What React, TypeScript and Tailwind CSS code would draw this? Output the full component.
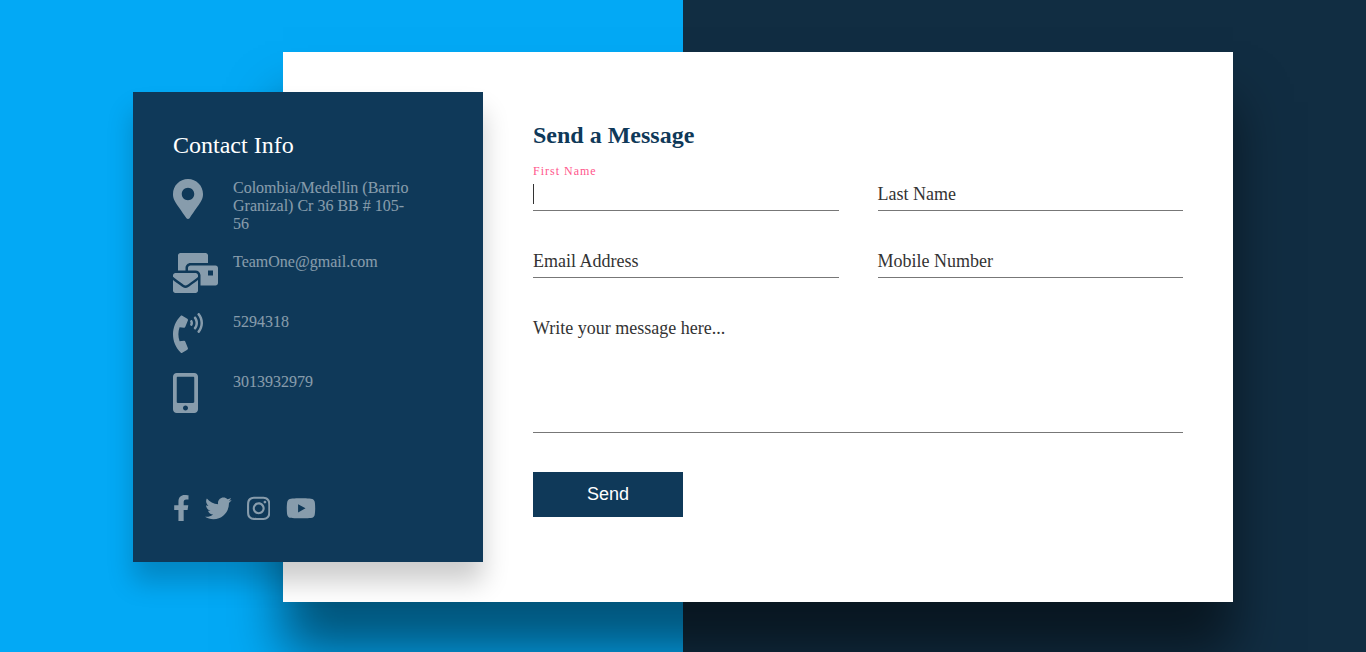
import type { ReactNode } from "react";
import {
  FaFacebookF,
  FaInstagram,
  FaMailBulk,
  FaMapMarkerAlt,
  FaMobileAlt,
  FaPhoneVolume,
  FaTwitter,
  FaYoutube,
} from "react-icons/fa";

function InfoRow({ icon, children }: { icon: ReactNode; children: ReactNode }) {
  return (
    <li className="mb-5 flex items-start opacity-50">
      <span className="w-[60px] shrink-0">{icon}</span>
      <span className="w-[180px] text-[16px] leading-[18px]">{children}</span>
    </li>
  );
}

function Field({ label, active = false }: { label: string; active?: boolean }) {
  return (
    <div className="relative flex h-[31px] w-[47%] items-start border-b border-[#777]">
      {active ? (
        <>
          <span className="absolute -top-4 left-0 text-[12px] leading-[14px] tracking-[1px] text-[#ff568c]">
            {label}
          </span>
          <span className="mt-1 h-5 w-px bg-[#333]" />
        </>
      ) : (
        <span className="mt-1 text-[18px] leading-5 text-[#333]">{label}</span>
      )}
    </div>
  );
}

export default function App() {
  return (
    <main className="flex h-[652px] w-full overflow-hidden bg-[linear-gradient(90deg,#03a9f5_50%,#112d42_50%)] pt-[52px] pl-[133px] font-['Liberation_Serif',serif]">
      <aside className="relative z-10 mt-10 flex h-[470px] w-[350px] shrink-0 flex-col justify-between bg-[#0f3959] p-10 text-white shadow-[0_20px_25px_rgba(0,0,0,0.2)]">
        <div>
          <h2 className="text-[24px] leading-[27px]">Contact Info</h2>
          <ul className="mt-5">
            <InfoRow icon={<FaMapMarkerAlt className="h-10 w-[30px]" />}>
              Colombia/Medellin (Barrio Granizal) Cr 36 BB # 105-56
            </InfoRow>
            <InfoRow icon={<FaMailBulk className="h-10 w-[45px]" />}>TeamOne@gmail.com</InfoRow>
            <InfoRow icon={<FaPhoneVolume className="h-10 w-[30px]" />}>5294318</InfoRow>
            <InfoRow icon={<FaMobileAlt className="h-10 w-[25px]" />}>3013932979</InfoRow>
          </ul>
        </div>
        <div className="mb-[0.7px] flex gap-[15.3px] opacity-50">
          <FaFacebookF className="h-[26.7px] w-[16.7px]" />
          <FaTwitter className="h-[26.7px] w-[26.7px]" />
          <FaInstagram className="h-[26.7px] w-[23.4px]" />
          <FaYoutube className="h-[26.7px] w-[30px]" />
        </div>
      </aside>
      <section className="-ml-[200px] h-[550px] w-[950px] shrink-0 bg-white pt-[70px] pr-[50px] pl-[250px] shadow-[0_50px_50px_rgba(0,0,0,0.5)]">
        <h2 className="text-[24px] leading-[27px] font-bold text-[#0f3959]">Send a Message</h2>
        <form className="mt-[31px]">
          <div className="mb-9 flex justify-between">
            <Field label="First Name" active />
            <Field label="Last Name" />
          </div>
          <div className="mb-9 flex justify-between">
            <Field label="Email Address" />
            <Field label="Mobile Number" />
          </div>
          <div className="h-[119px] border-b border-[#777] pt-1 text-[18px] leading-5 text-[#333]">
            Write your message here...
          </div>
          <button
            type="button"
            className="mt-[39px] h-[45px] w-[150px] bg-[#0f3959] font-['Liberation_Sans',sans-serif] text-[18px] text-white"
          >
            Send
          </button>
        </form>
      </section>
    </main>
  );
}
